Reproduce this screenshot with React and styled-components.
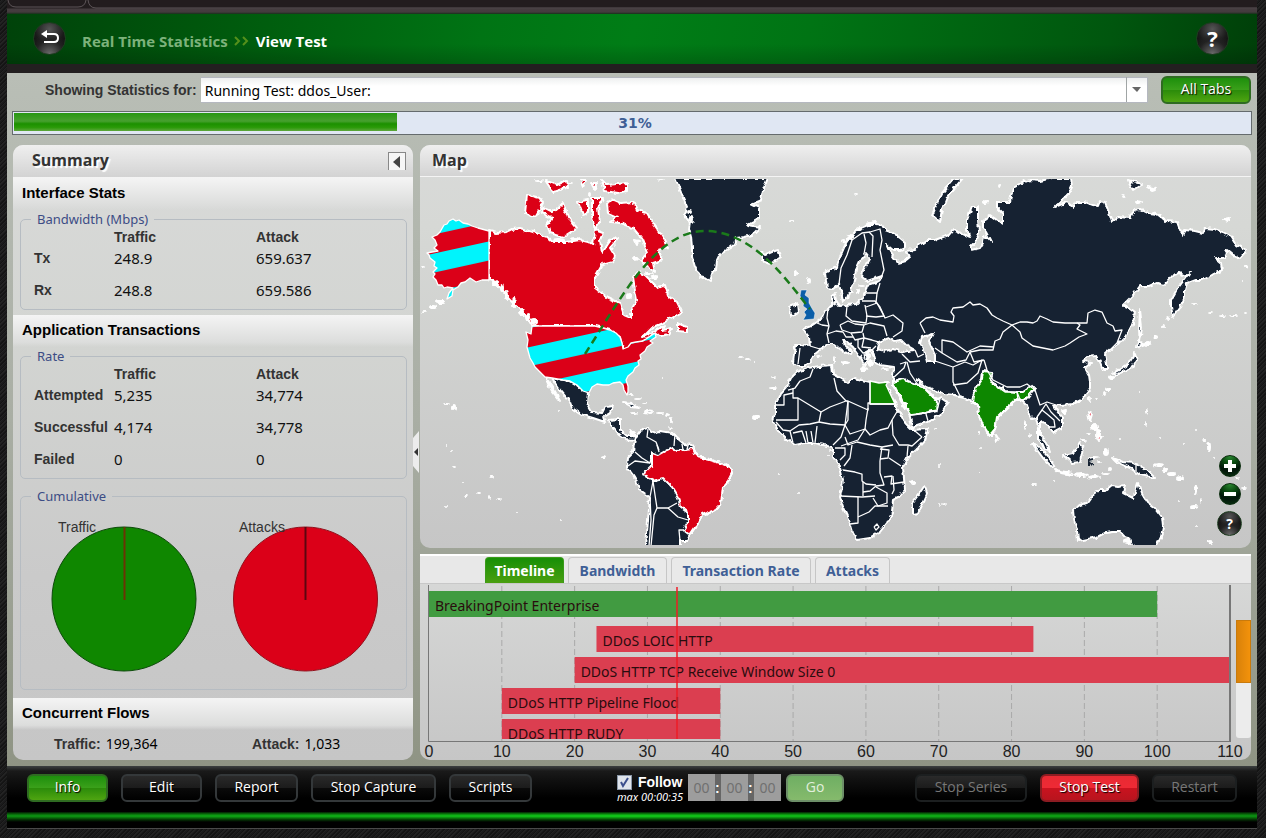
import React, { useState } from "react";
import styled, { createGlobalStyle } from "styled-components";

const theme = {
  fonts: {
    title: '"Open Sans", sans-serif',
    text: '"Noto Sans", sans-serif',
    label: '"Liberation Sans", Arial, sans-serif',
  },
  colors: {
    navy: "#142233",
    red: "#db0018",
    green: "#0f8700",
    cyan: "#00f4fc",
    blue: "#3f5f96",
    legend: "#3c4c85",
    dark: "#333333",
  },
};

const bandwidthRows = [
  { name: "Tx", traffic: "248.9", attack: "659.637" },
  { name: "Rx", traffic: "248.8", attack: "659.586" },
];

const rateRows = [
  { name: "Attempted", traffic: "5,235", attack: "34,774" },
  { name: "Successful", traffic: "4,174", attack: "34,778" },
  { name: "Failed", traffic: "0", attack: "0" },
];

const tabs = [
  { name: "Timeline", width: 79 },
  { name: "Bandwidth", width: 99 },
  { name: "Transaction Rate", width: 140 },
  { name: "Attacks", width: 75 },
];

const timelineBars = [
  { name: "BreakingPoint Enterprise", from: 0, to: 100, y: 7, color: "#419b41" },
  { name: "DDoS LOIC HTTP", from: 23, to: 83, y: 42, color: "#db3e50" },
  { name: "DDoS HTTP TCP Receive Window Size 0", from: 20, to: 110, y: 73, color: "#db3e50" },
  { name: "DDoS HTTP Pipeline Flood", from: 10, to: 40, y: 104, color: "#db3e50" },
  { name: "DDoS HTTP RUDY", from: 10, to: 40, y: 135, color: "#db3e50" },
];

const ticks = [0, 10, 20, 30, 40, 50, 60, 70, 80, 90, 100, 110];

/* ---- map data ---- */
const eurasia =
  "825,273 830,270 837,267 839,259 843,250 846,243 850,237 856,231 863,227 868,225 873,222 877,224 882,225 885,230 893,233 900,238 905,242 905,248 900,250 893,250 887,245 890,252 898,263 905,261 910,257 907,251 914,250 918,246 927,240 935,240 943,237 949,235 953,230 960,233 970,238 967,229 967,220 972,207 978,207 978,220 979,233 976,241 970,247 972,250 980,248 983,243 984,235 991,242 986,232 983,228 983,220 990,215 1002,224 1002,213 997,208 997,202 1010,202 1011,196 1013,188 1022,183 1030,180 1040,181 1052,178 1071,178 1072,187 1069,193 1055,207 1067,202 1074,208 1076,202 1085,202 1093,205 1098,206 1100,201 1105,202 1109,213 1112,222 1118,217 1130,218 1134,210 1140,209 1148,213 1157,214 1166,221 1177,222 1182,235 1184,230 1195,231 1203,233 1205,228 1214,229 1223,232 1232,237 1237,245 1247,250 1240,258 1233,255 1227,250 1224,258 1215,258 1221,263 1222,270 1212,275 1203,280 1195,280 1187,283 1185,290 1185,297 1180,307 1173,317 1171,307 1171,300 1176,291 1181,284 1190,272 1186,276 1179,273 1173,275 1169,280 1165,285 1157,283 1150,286 1140,286 1133,295 1123,305 1130,308 1135,312 1133,322 1130,330 1124,338 1118,345 1111,349 1105,354 1107,363 1107,370 1103,370 1100,362 1096,356 1088,357 1083,361 1092,362 1085,368 1089,375 1090,382 1090,388 1087,393 1081,400 1073,404 1060,405 1054,406 1057,411 1062,417 1062,428 1053,433 1048,426 1043,422 1040,424 1040,435 1046,441 1050,451 1045,450 1042,443 1038,439 1038,428 1036,417 1031,418 1027,405 1023,401 1017,400 1007,408 997,418 995,430 990,436 986,432 983,425 979,415 978,405 972,402 963,397 955,395 944,394 937,391 927,387 917,379 921,386 930,393 937,400 941,398 948,403 942,413 933,419 927,422 912,427 910,417 906,408 902,403 898,395 893,385 893,376 894,367 887,366 880,365 875,362 873,355 871,349 866,352 868,360 865,366 861,358 853,347 846,341 843,340 845,345 852,352 847,354 840,349 834,344 829,344 820,349 815,353 812,360 805,366 798,366 793,363 795,345 803,345 810,346 809,337 803,329 811,326 817,322 822,318 825,311 832,307 832,298 835,293 836,301 839,306 847,305 856,304 862,298 865,292 867,285 880,281 882,276 867,281 862,277 863,270 870,258 866,253 861,259 856,270 853,285 848,298 843,301 839,284 833,289 827,288";
const africa =
  "797,372 808,368 820,366 832,365 833,374 840,378 848,383 855,378 862,380 870,382 879,383 888,382 886,385 890,392 895,403 898,410 903,420 909,427 912,430 928,429 925,440 917,449 908,457 903,467 904,478 905,490 899,497 893,500 892,513 887,523 880,532 870,538 857,540 853,533 850,523 844,510 840,497 842,488 843,480 840,467 833,457 833,447 823,445 815,443 805,443 795,445 786,439 780,433 773,422 775,412 775,405 780,395 787,387 791,378";
const greenland =
  "675,178 680,190 684,200 687,207 685,215 690,222 689,230 691,237 692,247 692,257 695,267 700,277 707,279 710,281 713,272 716,270 717,260 720,254 730,248 735,244 737,238 745,237 752,235 760,227 748,225 759,219 759,208 751,204 761,200 763,190 768,178";
const southAmerica =
  "635,438 640,431 648,428 652,433 660,431 672,433 677,438 684,444 692,445 696,451 697,457 703,457 710,460 720,463 730,467 732,473 728,481 723,487 722,495 721,503 715,510 702,515 698,523 690,535 687,541 680,541 680,547 646,547 648,520 650,497 640,490 636,480 633,475 627,467 628,457 633,452";
const darkLands = [
  eurasia,
  africa,
  greenland,
  southAmerica,
  "552,378 563,380 570,381 577,385 582,390 588,393 587,403 592,412 602,413 605,407 613,406 610,413 603,417 605,422 593,418 583,415 572,408 570,402 560,390",
  "546,378 551,385 556,394 560,401 552,391",
  "608,420 620,419 620,430 627,436 635,436 634,440 626,439 619,434 613,427",
  "623,402 631,403 639,408 632,407",
  "646,410 653,411 651,413 645,412",
  "761,252 765,255 772,252 778,250 781,257 770,264 762,261",
  "790,307 797,304 798,312 791,317",
  "963,178 953,180 942,193 937,203 932,215 940,222 942,210 947,197 957,185",
  "1128,180 1134,182 1142,184 1133,190",
  "1148,187 1156,189 1153,190",
  "1136,201 1141,202 1138,203",
  "1224,219 1229,218 1228,221",
  "1140,310 1142,327 1140,342 1139,330",
  "1138,342 1145,345 1137,348",
  "1135,353 1137,360 1132,368 1115,375 1113,373 1128,365",
  "1088,399 1090,397 1089,402",
  "1062,411 1066,410 1064,413",
  "1063,455 1073,453 1080,443 1083,448 1080,462 1072,463",
  "1032,443 1042,450 1055,465 1053,468 1043,458",
  "1055,470 1073,473 1072,475 1057,472",
  "1113,458 1123,462 1135,463 1147,470 1155,478 1140,475 1130,468 1117,462",
  "996,434 999,438 997,441",
  "925,485 927,493 918,513 913,514 913,502 919,494",
  "1073,510 1080,505 1088,502 1093,495 1100,490 1106,490 1112,485 1118,486 1125,485 1123,493 1133,498 1138,483 1142,494 1147,502 1155,508 1162,517 1163,527 1161,537 1156,547 1133,547 1128,537 1124,536 1120,532 1113,532 1105,533 1097,537 1088,539 1078,541 1077,530 1074,520",
];
const canada =
  "489,231 497,233 507,232 513,229 520,228 533,232 547,237 553,242 567,242 580,240 588,242 593,245 595,230 603,233 600,240 602,253 608,244 613,237 618,239 610,248 615,256 613,262 602,265 595,277 595,288 607,297 620,303 624,315 631,318 631,310 637,300 635,290 633,277 638,272 645,275 653,283 658,288 665,285 668,295 677,302 682,312 677,315 665,322 653,327 643,337 653,332 665,325 663,331 672,329 668,334 660,336 656,333 643,341 636,347 623,349 620,337 610,330 595,326 532,326 527,317 517,307 507,297 500,287 495,282 489,280";
const redLands = [
  canada,
  "527,195 540,198 543,203 535,217 525,213",
  "543,207 553,212 563,203 568,217 577,228 563,237 550,233 547,225 552,218 542,213",
  "578,202 588,200 588,213 583,215",
  "592,198 603,198 598,207 600,223 595,230 592,217",
  "607,203 613,200 620,203 633,202 637,210 647,213 653,223 660,233 668,247 658,250 662,260 653,263 655,272 647,267 640,260 648,253 643,240 633,228 620,223 610,222 617,217 608,213",
  "602,180 607,185 627,183 627,191 617,193 605,191",
  "545,180 557,185 567,180 568,187 553,192",
  "580,180 586,180 583,187",
  "591,183 596,183 595,190",
  "635,240 639,241 637,244",
  "634,258 638,258 636,261",
  "678,323 682,325 687,327 687,332 678,331",
  "1088,412 1092,414 1090,421",
  "1097,437 1102,436 1099,441",
];
const brazil =
  "673,447 677,451 693,449 697,457 710,460 720,463 730,467 732,473 728,481 723,487 722,495 721,503 715,510 702,515 698,523 690,535 683,530 688,522 688,513 680,507 678,497 672,487 663,478 653,481 647,478 644,473 652,465 652,453 658,455 667,450";
const striped = [
  "444,225 447,224 449,221 453,219 456,221 459,220 463,223 468,224 472,226 478,228 489,231 489,280 482,280 476,282 470,278 465,282 461,283 458,287 453,290 452,296 447,299 449,293 453,288 447,287 444,288 442,285 438,285 436,280 433,277 435,274 433,272 437,268 434,266 435,262 430,258 429,255 427,253 432,252 438,251 434,248 437,245 435,240 432,237 437,235 440,232",
  "532,326 595,326 603,328 610,330 616,333 620,337 622,343 623,349 628,347 631,343 636,342 643,341 655,333 656,337 650,341 653,343 647,347 645,351 640,355 641,359 638,361 639,365 635,368 633,372 628,376 626,380 628,386 628,392 627,395 624,390 623,385 620,382 613,383 609,385 603,385 597,384 592,387 589,393 583,391 577,385 570,381 563,380 552,378 545,377 540,372 535,367 533,363 530,358 527,347 528,340 526,332 531,334",
];
const india =
  "983,371 992,372 990,378 995,385 1006,391 1016,392 1022,392 1032,385 1035,388 1025,400 1017,399 1007,408 997,418 995,430 990,436 983,425 979,415 978,405 972,402 973,396 976,388 982,379";
const saudi = "893,382 903,379 923,387 930,394 938,402 937,410 925,413 910,415 902,400";
const egypt = "870,381 879,383 888,382 886,385 895,404 870,404";
const uk = "801,290 807,290 805,295 809,298 809,303 813,310 815,313 814,319 803,320 806,315 804,312 807,309 803,306 804,302 800,296";
const seas = [
  "877,349 879,342 889,338 894,341 901,340 907,346 914,350 903,352 893,349 885,351",
  "922,337 933,334 929,342 935,354 935,362 927,362 924,350 920,344",
  "631,430 634,433 632,435",
];
const borders = [
  // Asia
  "920,323 926,318 933,317 940,320 953,322 954,316 951,312 953,308 963,307 970,302 973,305 980,304 987,308 992,315 997,318 1003,321 1012,325 1020,322 1027,322 1033,323 1037,321 1040,316 1047,319 1053,322 1065,323 1077,323 1087,323 1088,313 1095,310 1102,312 1107,323 1113,326 1115,331 1122,330 1117,343 1108,352",
  "1012,325 1020,332 1022,338 1033,346 1043,348 1053,350 1065,346 1070,343 1079,337 1087,334 1077,329 1080,325 1077,323",
  "1012,325 1003,332 1000,339 995,341 993,350 980,350 970,352 974,362 984,360",
  "920,323 925,333",
  "942,353 942,340 953,342 967,352 980,346 994,347",
  "935,348 942,353 957,362 966,360 970,352",
  "984,360 987,370 993,380 1007,387 1020,387 1027,384 1035,390 1040,405 1047,402 1056,405",
  "935,361 938,362 953,367 953,382 960,396",
  "953,367 965,362 973,365 982,360 978,373 967,383 953,385",
  "992,383 1005,392 1017,392 1018,400",
  "907,362 910,373 918,385",
  "893,378 904,368 906,362 900,364",
  "915,350 918,357 924,354",
  "902,354 910,362 920,361",
  "910,415 925,413 937,410 940,399",
  "926,414 928,421",
  "1037,417 1042,410 1047,414 1054,420 1055,427 1048,427",
  "1042,410 1046,404 1051,412 1060,421",
  "1017,392 1021,402",
  // Nordic and Baltic countries
  "839,284 841,268 847,255 852,240 862,233 870,232 880,229 882,240 880,250 884,270 881,278",
  "864,254 866,243 864,234",
  "872,257 873,236 869,232",
  "864,293 877,293 880,283",
  "862,301 875,301 880,307 885,318 893,315 903,323 902,331 893,337",
  "877,293 876,303",
  // Central Europe
  "847,306 846,316 852,321 866,323 867,316 865,305",
  "866,307 877,303 884,316",
  "866,316 876,317 884,316",
  "864,325 870,323 884,326 887,336",
  "840,325 848,321 855,324 864,325 862,332 851,333 842,330 840,325",
  "828,308 827,318 829,326 827,334 829,343",
  "817,323 822,325 829,326",
  "827,334 836,331 843,332 846,337 853,337",
  "851,333 855,340 864,338 863,333",
  "864,338 872,340 879,342",
  "858,339 858,347 863,353 872,350 876,346",
  "864,353 865,360",
  "864,338 862,347 871,348",
  "810,346 820,349",
  "800,348 798,364",
  // Africa
  "813,369 810,377 800,381 795,388 788,390",
  "793,388 793,398 798,398 821,412 830,407 846,401 837,391 834,378",
  "798,398 798,420 776,420",
  "775,405 784,405 784,395 793,393",
  "870,403 868,403 868,410 848,401 846,401",
  "870,381 870,404 896,404",
  "821,412 819,422 810,424 799,425 790,431",
  "776,422 783,430 790,431 793,443",
  "793,433 802,431 806,443",
  "806,431 808,443",
  "811,431 813,443",
  "817,426 815,443",
  "819,422 830,424 845,425 848,401",
  "845,425 841,437 833,445",
  "848,401 848,420 845,425 850,434 865,429 870,435 880,430 888,428 892,420 898,410",
  "868,408 866,420 865,429",
  "892,420 893,435 899,445 908,445 912,446 922,437",
  "905,423 915,431 922,437",
  "845,437 848,445 857,442 870,445 882,447 893,445",
  "865,429 858,440 841,446",
  "835,448 845,448 845,455 840,460",
  "843,470 855,472 862,474 862,481 866,484 876,485",
  "852,445 850,458 844,466",
  "882,447 880,461 880,473 884,485 876,486",
  "880,449 889,450 888,458 880,459",
  "908,446 907,457",
  "889,458 901,466",
  "884,477 892,476 891,484 904,482",
  "893,476 894,490 892,494",
  "840,496 862,497 875,496",
  "863,482 863,496",
  "876,486 870,491 863,492",
  "858,497 858,523 850,524",
  "858,517 869,512 875,506 888,506",
  "876,487 887,493 887,503 878,506 873,498",
  "874,527 877,524 879,527 876,530 874,527",
  // Americas
  "628,466 635,461 650,463",
  "635,452 642,458 650,463 652,454",
  "648,429 647,437 656,442 659,450",
  "659,452 657,445",
  "675,434 674,446",
  "682,444 683,450",
  "688,445 687,450",
  "650,497 653,481",
  "653,481 655,495 657,508",
  "650,497 651,520 649,546",
  "657,508 654,515 651,546",
  "657,508 668,508 677,503",
  "668,508 678,517 688,520",
  "680,541 679,530 684,530",
  "1136,463 1136,475",
];

// [x, y, rx, ry] of the islands too small to have a border
const islets = [
  [447, 404, 3, 1], [454, 407, 2, 3], [447, 446, 1, 1], [451, 451, 1, 1], [454, 467, 2, 1], [492, 477, 2, 2],
  [463, 482, 1, 1], [466, 495, 2, 1], [479, 493, 2, 1], [489, 497, 1, 2], [499, 499, 2, 1], [446, 506, 1, 1],
  [517, 513, 1, 1], [561, 520, 1, 1], [603, 457, 3, 2], [558, 411, 1, 1], [423, 267, 2, 1], [631, 395, 3, 1],
  [638, 399, 3, 1], [645, 403, 3, 1], [660, 413, 4, 1], [667, 415, 2, 2], [671, 420, 2, 3], [670, 428, 2, 1],
  [634, 413, 4, 1], [741, 357, 2, 1], [748, 359, 3, 1], [754, 362, 1, 1], [663, 377, 1, 1], [773, 377, 2, 1],
  [756, 417, 4, 2], [773, 388, 4, 1], [796, 273, 2, 3], [809, 281, 2, 3], [792, 221, 3, 1], [856, 194, 2, 1],
  [819, 356, 3, 1], [834, 360, 1, 4], [845, 363, 4, 2], [864, 369, 4, 2], [871, 363, 3, 3], [885, 369, 4, 1],
  [851, 292, 3, 1], [858, 291, 2, 3], [835, 303, 2, 2], [862, 286, 3, 1], [1000, 186, 2, 2], [986, 202, 3, 2],
  [1123, 196, 2, 2], [1168, 318, 2, 2], [1163, 327, 2, 2], [1155, 337, 3, 2], [1148, 343, 4, 2], [1195, 304, 3, 1],
  [1210, 313, 3, 1], [1222, 316, 4, 1], [1234, 316, 4, 1], [1245, 314, 2, 1], [1246, 266, 2, 2], [1242, 281, 1, 1],
  [1112, 377, 3, 2], [1108, 389, 3, 2], [1104, 394, 2, 2], [1097, 398, 2, 1], [1139, 392, 1, 1], [1146, 412, 1, 3],
  [1145, 424, 1, 2], [1120, 439, 1, 1], [1160, 438, 1, 1], [1184, 444, 1, 1], [1205, 440, 3, 1], [1209, 447, 2, 5],
  [1213, 457, 1, 1], [1196, 430, 1, 1], [1095, 427, 4, 3], [1098, 433, 3, 4], [1089, 434, 3, 1], [1083, 440, 4, 1],
  [1081, 475, 7, 2], [1094, 477, 6, 2], [1105, 474, 4, 1], [1106, 452, 3, 4], [1093, 458, 6, 1], [1111, 469, 2, 2],
  [1100, 462, 2, 1], [1159, 465, 5, 2], [1165, 470, 3, 2], [1172, 474, 4, 2], [1180, 478, 4, 2], [1196, 490, 2, 5],
  [1201, 501, 1, 3], [1194, 507, 4, 2], [1179, 501, 1, 1], [1197, 526, 1, 1], [1210, 542, 3, 2], [1244, 488, 3, 1],
  [1025, 425, 1, 5], [1030, 435, 1, 2], [1034, 484, 2, 1], [1055, 480, 1, 1], [979, 433, 1, 3], [981, 448, 1, 1],
  [936, 428, 2, 1], [939, 466, 1, 1], [979, 472, 1, 1], [913, 483, 3, 2], [940, 505, 1, 2], [944, 504, 2, 1],
  [799, 493, 1, 1], [779, 474, 1, 1], [830, 451, 2, 1], [828, 456, 1, 1], [534, 322, 4, 3], [528, 317, 3, 4],
  [522, 312, 3, 4], [514, 303, 2, 5], [507, 295, 2, 5], [502, 288, 2, 4], [495, 283, 3, 2], [441, 302, 5, 2],
  [433, 307, 4, 2], [425, 312, 3, 1], [1235, 463, 2, 1], [1237, 478, 2, 1], [1128, 541, 4, 3], [570, 183, 3, 1],
  [590, 194, 2, 2], [539, 181, 4, 1], [660, 179, 3, 1], [661, 180, 3, 1], [691, 220, 3, 4], [689, 212, 2, 2],
  [558, 240, 6, 2], [575, 239, 5, 2], [629, 296, 3, 3], [655, 277, 4, 2], [649, 273, 4, 1], [850, 238, 3, 3],
  [844, 241, 3, 2], [870, 224, 4, 2], [859, 229, 3, 2], [868, 356, 3, 4],
];

const GlobalStyle = createGlobalStyle`
  * {
    box-sizing: border-box;
  }
  body {
    margin: 0;
    background: repeating-linear-gradient(135deg, #141414 0 1px, #232323 1px 2px, #1b1b1c 2px 3px);
  }
  button, input, select {
    margin: 0;
    font: inherit;
  }
`;

function StatsTable({ rows }) {
  return (
    <StatsTableStyled>
      <thead>
        <tr>
          <td />
          <th scope="col">Traffic</th>
          <th scope="col">Attack</th>
        </tr>
      </thead>
      <tbody>
        {rows.map((row) => (
          <tr key={row.name}>
            <th scope="row">{row.name}</th>
            <td>{row.traffic}</td>
            <td>{row.attack}</td>
          </tr>
        ))}
      </tbody>
    </StatsTableStyled>
  );
}

function Summary() {
  return (
    <SummaryStyled>
      <PanelHeader>
        <h2>Summary</h2>
        <CollapseButton type="button" aria-label="Collapse summary">
          <svg width="8" height="12" viewBox="0 0 8 12">
            <path d="M7 0v12L0 6z" fill="#444" />
          </svg>
        </CollapseButton>
      </PanelHeader>
      <SectionTitle>Interface Stats</SectionTitle>
      <Group $gap={5}>
        <legend>Bandwidth (Mbps)</legend>
        <StatsTable rows={bandwidthRows} />
      </Group>
      <SectionTitle>Application Transactions</SectionTitle>
      <Group $gap={8}>
        <legend>Rate</legend>
        <StatsTable rows={rateRows} />
      </Group>
      <Group $gap={8}>
        <legend>Cumulative</legend>
        <Pies viewBox="21 505 385 184">
          <circle cx="124" cy="599" r="72" fill={theme.colors.green} stroke="#0b4a08" />
          <path d="M124.500 527v73" stroke="#6b3305" strokeWidth="2" />
          <circle cx="305.500" cy="599" r="72" fill={theme.colors.red} stroke="#93101c" />
          <path d="M305.500 527v73" stroke="#5c0610" strokeWidth="2" />
          <text x="58" y="532">Traffic</text>
          <text x="239" y="532">Attacks</text>
        </Pies>
      </Group>
      <SectionTitle>Concurrent Flows</SectionTitle>
      <Flows>
        <div><dt>Traffic:</dt><dd>199,364</dd></div>
        <div><dt>Attack:</dt><dd>1,033</dd></div>
      </Flows>
      <SplitHandle type="button" aria-label="Toggle summary">
        <svg width="7" height="42" viewBox="0 0 7 42">
          <path d="M6 0v42L0 35V7z" fill="#ececec" />
          <path d="M5 17v8L1 21z" fill="#333" />
        </svg>
      </SplitHandle>
    </SummaryStyled>
  );
}

function WorldMap() {
  return (
    <MapPanel>
      <PanelHeader $compact>
        <h2>Map</h2>
      </PanelHeader>
      <MapSvg viewBox="420 179 831 366" preserveAspectRatio="xMidYMid slice" role="img" aria-label="World map">
        <defs>
          <pattern id="stripes" width="40" height="37.3" y="5.1" patternUnits="userSpaceOnUse" patternTransform="rotate(-12.4)">
            <rect width="40" height="37.3" fill={theme.colors.red} />
            <rect width="40" height="18.6" fill={theme.colors.cyan} />
          </pattern>
          {/* breaks up the straight coast segments */}
          <filter id="coast" filterUnits="userSpaceOnUse" x="420" y="179" width="831" height="366">
            <feTurbulence type="fractalNoise" baseFrequency="0.18" numOctaves="2" seed="4" />
            <feDisplacementMap in="SourceGraphic" scale="5" xChannelSelector="R" yChannelSelector="G" />
          </filter>
        </defs>
        <g filter="url(#coast)" stroke="#fff" strokeWidth="2" strokeLinejoin="round">
          {darkLands.map((points) => (
            <polygon key={points} points={points} fill={theme.colors.navy} />
          ))}
          {redLands.map((points) => (
            <polygon key={points} points={points} fill={theme.colors.red} />
          ))}
          <polygon points={brazil} fill={theme.colors.red} />
          <polygon points={india} fill={theme.colors.green} />
          <polygon points={saudi} fill={theme.colors.green} />
          {seas.map((points) => (
            <polygon key={points} points={points} fill="#d0d1cf" />
          ))}
          {islets.map(([x, y, rx, ry]) => (
            <ellipse key={`${x}-${y}`} cx={x} cy={y} rx={rx} ry={ry} fill="#fff" stroke="none" />
          ))}
          <path d="M1089 466v-6l3-1M1089 461l4 5" stroke={theme.colors.navy} fill="none" />
        </g>
        <polygon points={uk} fill="#0b5ea8" stroke="#fff" strokeWidth="0.5" />
        <g stroke="#fff" strokeWidth="1.3" strokeLinejoin="round">
          <polygon points={egypt} fill={theme.colors.green} />
          {striped.map((points) => (
            <polygon key={points} points={points} fill="url(#stripes)" />
          ))}
        </g>
        <g stroke="#fff" strokeWidth="1.3" fill="none" strokeLinejoin="round">
          {borders.map((points) => (
            <polyline key={points} points={points} />
          ))}
        </g>
        <path d="M585 354C620 300 655 231 705 231S790 285 810 309" fill="none" stroke="#1a7a1a" strokeWidth="2.5" strokeDasharray="8 5" />
      </MapSvg>
      <MapControls>
        <RoundButton type="button" $size={22} $green aria-label="Zoom in">
          <svg width="14" height="14" viewBox="0 0 14 14"><path d="M7 1v12M1 7h12" stroke="#fff" strokeWidth="4" /></svg>
        </RoundButton>
        <RoundButton type="button" $size={22} $green aria-label="Zoom out">
          <svg width="14" height="14" viewBox="0 0 14 14"><path d="M1 7h12" stroke="#fff" strokeWidth="4" /></svg>
        </RoundButton>
        <RoundButton type="button" $size={25} $fontSize={14}>?</RoundButton>
      </MapControls>
    </MapPanel>
  );
}

function Timeline() {
  const scale = (value) => 9 + (value * 801) / 110;
  return (
    <ChartArea>
      <Chart viewBox="0 0 816 176" preserveAspectRatio="xMinYMin meet">
        <defs>
          <clipPath id="plot"><rect x="8" y="0" width="803" height="155" /></clipPath>
        </defs>
        {ticks.slice(1, -1).map((tick) => (
          <path key={tick} d={`M${scale(tick)} 2V157`} stroke="#aaa" strokeDasharray="6 3" />
        ))}
        <g clipPath="url(#plot)">
          {timelineBars.map((bar) => (
            <g key={bar.name}>
              <rect x={scale(bar.from)} y={bar.y} width={scale(bar.to) - scale(bar.from)} height="26" fill={bar.color} />
              <text className="barName" x={scale(bar.from) + 6} y={bar.y + 20}>{bar.name}</text>
            </g>
          ))}
          <path d="M257 3V155" stroke="#ee1c25" strokeOpacity="0.75" strokeWidth="2" />
        </g>
        <path d="M8.500 1V157.500H810" fill="none" stroke="#777" />
        <path d="M810 1V158" stroke="#777" strokeWidth="2" />
        {ticks.map((tick) => (
          <text key={tick} className="tick" x={scale(tick)} y="173" textAnchor="middle">{tick}</text>
        ))}
      </Chart>
      <ScrollTrack><div /></ScrollTrack>
    </ChartArea>
  );
}

export default function App() {
  const [follow, setFollow] = useState(true);
  const progress = 31;

  return (
    <Frame>
      <GlobalStyle />
      <TopStrip>
        <svg width="100%" height="9">
          <path d="M1 0q1 7 8 7h62q7 0 8-7M81 0q1 8 8 8H2000" fill="none" stroke="#5d5558" />
        </svg>
      </TopStrip>
      <Header>
        <RoundButton type="button" $size={33} aria-label="Back">
          <svg width="20" height="18" viewBox="0 0 20 18">
            <path d="M5 5h9q4 0 4 4t-4 4H4" fill="none" stroke="#fff" strokeWidth="2" />
            <path d="M1 5l6-4v8z" fill="#fff" />
          </svg>
        </RoundButton>
        <Breadcrumb>
          <a href="#statistics">Real Time Statistics</a>
          <svg width="16" height="10" viewBox="0 0 16 10">
            <path d="M1 1l4 4-4 4M9 1l4 4-4 4" fill="none" stroke="#55901b" strokeWidth="2" />
          </svg>
          <h1>View Test</h1>
        </Breadcrumb>
        <RoundButton type="button" $size={33} $fontSize={22}>?</RoundButton>
      </Header>
      <Content>
        <Filter>
          <label htmlFor="runningTest">Showing Statistics for:</label>
          <SelectBox>
            <select id="runningTest">
              <option>Running Test: ddos_User:</option>
            </select>
            <svg width="21" height="25" viewBox="0 0 21 25">
              <path d="M0.500 0v25" stroke="#a0a5a5" />
              <path d="M6 10h9l-4 5z" fill="#666" />
            </svg>
          </SelectBox>
          <BarButton type="button" $variant="green" $width={90}>All Tabs</BarButton>
        </Filter>
        <Progress role="progressbar" aria-valuenow={progress} aria-label="Test progress">
          <div className="bar" style={{ width: `${progress}%` }} />
          <span>{progress}%</span>
        </Progress>
        <Columns>
          <Summary />
          <MainColumn>
            <WorldMap />
            <TimelinePanel>
              <TabBar role="tablist">
                {tabs.map((tab, index) => (
                  <Tab key={tab.name} type="button" role="tab" aria-selected={index === 0} $active={index === 0} $width={tab.width}>
                    {tab.name}
                  </Tab>
                ))}
              </TabBar>
              <Timeline />
            </TimelinePanel>
          </MainColumn>
        </Columns>
      </Content>
      <Footer>
        <ButtonRow>
          <BarButton type="button" $variant="green" $width={81}>Info</BarButton>
          <BarButton type="button" $width={81}>Edit</BarButton>
          <BarButton type="button" $width={83}>Report</BarButton>
          <BarButton type="button" $width={125}>Stop Capture</BarButton>
          <BarButton type="button" $width={83}>Scripts</BarButton>
        </ButtonRow>
        <Seek>
          <FollowBox>
            <label>
              <input type="checkbox" checked={follow} onChange={() => setFollow(!follow)} />
              Follow
            </label>
            <small>max 00:00:35</small>
          </FollowBox>
          <TimeBoxes>
            <input type="text" aria-label="Hours" defaultValue="00" disabled />
            <span>:</span>
            <input type="text" aria-label="Minutes" defaultValue="00" disabled />
            <span>:</span>
            <input type="text" aria-label="Seconds" defaultValue="00" disabled />
          </TimeBoxes>
          <BarButton type="button" $variant="pale" $width={58} disabled>Go</BarButton>
        </Seek>
        <ButtonRow>
          <BarButton type="button" $width={112} disabled>Stop Series</BarButton>
          <BarButton type="button" $variant="red" $width={99}>Stop Test</BarButton>
          <BarButton type="button" $width={85} disabled>Restart</BarButton>
        </ButtonRow>
      </Footer>
      <GreenLine />
    </Frame>
  );
}

const Frame = styled.div`
  margin: 0 9px 9px 7px;
  min-width: 1100px;
  border-bottom: 1px solid #4a4a4a;
  background: #000;
`;

const TopStrip = styled.div`
  height: 14px;
  background: linear-gradient(#221c1e 0 8px, #453d40 9px, #443b3e 12px, #16301a 14px);

  svg {
    display: block;
  }
`;

const Header = styled.header`
  display: flex;
  align-items: center;
  height: 59px;
  padding: 0 28px 2px 26px;
  border-bottom: 9px solid #231f20;
  background:
    linear-gradient(rgba(0, 0, 0, 0) 60%, rgba(0, 0, 0, 0.18)),
    linear-gradient(100deg, #00420a 0%, #00560c 15%, #007414 38%, #007d16 50%, #007414 64%, #00560e 88%, #003f09 100%);
`;

const RoundButton = styled.button`
  display: flex;
  flex: none;
  align-items: center;
  justify-content: center;
  width: ${({ $size }) => $size}px;
  height: ${({ $size }) => $size}px;
  padding: 0;
  border: 1px solid ${({ $green }) => ($green ? "#0b2c0e" : "#1e3d20")};
  border-radius: 50%;
  color: #fff;
  font: bold ${({ $fontSize }) => $fontSize || 14}px ${theme.fonts.title};
  line-height: 1;
  background: ${({ $green }) =>
    $green
      ? "radial-gradient(circle at 50% 0%, #2b8a32, #0a4a10 35%, #02140a 65%, #0a3510)"
      : "radial-gradient(circle at 50% 100%, #6b6b6b, #222 40%, transparent 60%), radial-gradient(circle at 50% 20%, #555, #1a1a1a 50%, #050505)"};
`;

const Breadcrumb = styled.nav`
  display: flex;
  flex: 1;
  align-items: center;
  gap: 6px;
  margin-left: 16px;
  padding-top: 6px;
  color: #fff;
  font: bold 15px ${theme.fonts.title};

  a {
    color: #7db27b;
    text-decoration: none;
  }
  h1 {
    margin: 0;
    font: inherit;
  }
`;

const Content = styled.main`
  padding: 3px 5px 6px;
  background: linear-gradient(#b9beb6, #a9aea4 50%, #8f9484);
`;

const Filter = styled.div`
  display: flex;
  align-items: center;
  padding: 0 1px 0 33px;

  label {
    margin-right: 4px;
    color: ${theme.colors.dark};
    font: bold 14px ${theme.fonts.label};
  }
`;

const SelectBox = styled.div`
  position: relative;
  flex: 1;
  margin-right: 13px;

  select {
    display: block;
    width: 100%;
    height: 26px;
    padding: 0 4px;
    border: 1px solid #b5b8c0;
    border-left: 0;
    border-radius: 0;
    appearance: none;
    color: #000;
    background: linear-gradient(#eef0f0, #fff 8px);
    font: 14px ${theme.fonts.text};
  }
  svg {
    position: absolute;
    top: 0;
    right: 1px;
    pointer-events: none;
  }
`;

const barVariants = {
  dark: { border: "#34383a", background: "linear-gradient(#2a2a2a, #1c1c1c 48%, #0a0a0a 52%, #000)" },
  green: { border: "#2f6b22", background: "linear-gradient(#1d8f0c, #3aa01a 48%, #2c8c0a 52%, #4fa511)" },
  pale: { border: "#6d8f68", background: "linear-gradient(#6fae63, #85ba6c)" },
  red: { border: "#8c1c22", background: "linear-gradient(#e82a33, #ee2a35 48%, #c9131f 52%, #b8141e)" },
};

const BarButton = styled.button`
  flex: none;
  width: ${({ $width }) => $width}px;
  height: 28px;
  padding: 0 0 3px;
  border: 2px solid ${({ $variant }) => barVariants[$variant || "dark"].border};
  border-radius: 6px;
  background: ${({ $variant }) => barVariants[$variant || "dark"].background};
  color: #fff;
  font: 500 14px ${theme.fonts.title};
  line-height: 20px;
  text-shadow: 1px 1px 1px #000;
  white-space: nowrap;

  &:disabled {
    color: ${({ $variant }) => ($variant ? "#e2efdd" : "#777")};
    border-color: ${({ $variant }) => ($variant ? "#6d8f68" : "#1c1f20")};
    text-shadow: none;
  }
`;

const Progress = styled.div`
  display: flex;
  position: relative;
  height: 24px;
  margin-top: 7px;
  padding: 1px 1px 3px;
  border: 1px solid #656b6d;
  background: #e0e7f3;

  .bar {
    background: linear-gradient(#279712, #47a02f 45%, #1c9000 60%, #2a9a08 80%, #5da63c);
  }
  span {
    position: absolute;
    inset: 0 0 0 6px;
    color: ${theme.colors.blue};
    font: bold 14px/22px "DejaVu Sans", sans-serif;
    text-align: center;
  }
`;

const Columns = styled.div`
  display: grid;
  grid-template-columns: 400px minmax(0, 1fr);
  gap: 7px;
  margin: 10px 1px 0;
`;

const SummaryStyled = styled.section`
  position: relative;
  border-radius: 10px;
  background: linear-gradient(#d9dad9, #d3d5d2 30%, #cacaca 70%, #c6c6c6);
`;

const PanelHeader = styled.div`
  display: flex;
  align-items: center;
  justify-content: space-between;
  height: ${({ $compact }) => ($compact ? 32 : 33)}px;
  padding: 0 7px 0 ${({ $compact }) => ($compact ? 12 : 19)}px;
  border-bottom: 1px solid #f4f4f4;
  border-radius: 10px 10px 0 0;
  background: linear-gradient(#efefef, #d3d3d3);

  h2 {
    margin: 0;
    padding-bottom: 2px;
    color: ${theme.colors.dark};
    font: bold 16px/22px ${theme.fonts.title};
    text-shadow: 2px 2px 1px #fff;
  }
`;

const CollapseButton = styled.button`
  display: flex;
  align-items: center;
  justify-content: center;
  width: 18px;
  height: 18px;
  padding: 0;
  border: 1px solid #888;
  border-bottom: 0;
  background: #f6f6f6;
`;

const SectionTitle = styled.h3`
  height: 32px;
  margin: 0;
  padding-left: 9px;
  background: linear-gradient(#f4f4f4, #dcdddc 85%, rgba(216, 217, 216, 0));
  color: #000;
  font: bold 15px/30px ${theme.fonts.label};
`;

const Group = styled.fieldset`
  margin: 0 6px ${({ $gap }) => $gap}px 7px;
  padding: 0;
  border: 1px solid #b6bcc2;
  border-radius: 5px;

  legend {
    margin-left: 10px;
    padding: 0 6px;
    color: ${theme.colors.legend};
    font: 13px/18px ${theme.fonts.text};
  }
`;

const StatsTableStyled = styled.table`
  width: 100%;
  border-collapse: collapse;
  table-layout: fixed;
  text-align: left;

  th, td {
    padding: 0;
    color: #111;
    font: 15px/22px ${theme.fonts.text};
    vertical-align: top;
  }
  th {
    color: ${theme.colors.dark};
    font: bold 14px/22px ${theme.fonts.label};
  }
  thead th {
    height: 19px;
    line-height: 19px;
  }
  tbody tr {
    height: 32px;
  }
  tbody tr:last-child {
    height: 30px;
  }
  td:first-child, th:first-child {
    width: 93px;
    padding-left: 13px;
  }
  th:nth-child(2), td:nth-child(2) {
    width: 142px;
  }
`;

const Pies = styled.svg`
  display: block;
  width: 100%;

  text {
    fill: #333;
    font: 14px ${theme.fonts.label};
  }
`;

const Flows = styled.dl`
  display: grid;
  grid-template-columns: 198px 1fr;
  margin: 0;
  padding: 0 0 2px 41px;
  line-height: 28px;

  div {
    display: flex;
    gap: 5px;
  }
  dt {
    color: ${theme.colors.dark};
    font: bold 14px/28px ${theme.fonts.label};
  }
  dd {
    margin: 0;
    font: 14px/28px ${theme.fonts.text};
  }
`;

const SplitHandle = styled.button`
  position: absolute;
  top: 286px;
  right: -7px;
  width: 7px;
  height: 42px;
  padding: 0;
  border: 0;
  background: none;
`;

const MainColumn = styled.div`
  display: flex;
  flex-direction: column;
  gap: 6px;
`;

const MapPanel = styled.section`
  position: relative;
  flex: 1;
  padding-bottom: 3px;
  border-radius: 10px;
  background: linear-gradient(#d9dad9, #d6d8d5 20%, #c6c6c6);
`;

const MapSvg = styled.svg`
  display: block;
  width: 100%;
  height: 366px;
  margin-top: 2px;
`;

const MapControls = styled.div`
  display: flex;
  position: absolute;
  right: 9px;
  bottom: 12px;
  flex-direction: column;
  align-items: center;
  gap: 6px;
`;

const TimelinePanel = styled.section`
  border-radius: 0 0 10px 10px;
  background: linear-gradient(#d9dad9, #c6c6c6);
`;

const TabBar = styled.div`
  display: flex;
  align-items: flex-end;
  gap: 4px;
  height: 30px;
  padding: 0 65px;
  border-top: 2px solid #fff;
  border-bottom: 1px solid #c8c8c8;
  background: #e8e8e8;
`;

const Tab = styled.button`
  width: ${({ $width }) => $width}px;
  height: 26px;
  padding: 0 0 1px;
  border: 1px solid ${({ $active }) => ($active ? "#3a9a1a" : "#c6c6c6")};
  border-bottom: 0;
  border-radius: 4px 4px 0 0;
  background: ${({ $active }) => ($active ? "linear-gradient(#178f06, #4a9f10)" : "#e9e9e9")};
  color: ${({ $active }) => ($active ? "#fff" : theme.colors.blue)};
  font: bold 14px ${theme.fonts.text};
  white-space: nowrap;
`;

const ChartArea = styled.div`
  display: flex;
  align-items: flex-start;
`;

const Chart = styled.svg`
  display: block;
  flex: 1;
  min-width: 0;
  overflow: visible;

  .barName {
    fill: #2a0c0e;
    font: 14px ${theme.fonts.text};
  }
  .tick {
    fill: #222;
    font: 16px ${theme.fonts.label};
  }
`;

const ScrollTrack = styled.div`
  width: 15px;
  height: 118px;
  margin-top: 36px;
  border-radius: 3px;
  background: #ececec;

  div {
    height: 63px;
    border: 1px solid #c97a0c;
    background: linear-gradient(90deg, #d9820a, #f3920b);
  }
`;

const Footer = styled.footer`
  display: flex;
  align-items: flex-start;
  justify-content: space-between;
  height: 46px;
  padding: 8px 20px 0;
  background: linear-gradient(#3c4040, #1a1a1a 5px, #101010 14px, #000 32px);
`;

const ButtonRow = styled.div`
  display: flex;
  gap: 13px;
`;

const Seek = styled.div`
  display: flex;
  margin-left: 14px;
  gap: 5px;
`;

const FollowBox = styled.div`
  color: #fff;

  label {
    display: flex;
    align-items: center;
    gap: 6px;
    height: 16px;
    font: bold 14px ${theme.fonts.label};
  }
  input {
    width: 15px;
    height: 15px;
    border: 1px solid #8a97a8;
    appearance: none;
    background: #dfe4ec;
  }
  input:checked {
    background: #dfe4ec url("data:image/svg+xml,%3Csvg xmlns='http://www.w3.org/2000/svg' viewBox='0 0 13 13'%3E%3Cpath d='M3 6l2 4 5-8' fill='none' stroke='%233c4f8c' stroke-width='2'/%3E%3C/svg%3E");
  }
  small {
    display: block;
    font: italic 11px/14px ${theme.fonts.text};
  }
`;

const TimeBoxes = styled.div`
  display: flex;
  height: 27px;
  background: #666;

  input {
    width: 27px;
    padding: 0;
    border: 0;
    background: #9d9d9d;
    color: #707070;
    font: 14px ${theme.fonts.text};
    text-align: center;
  }
  span {
    width: 6px;
    color: #fff;
    font: bold 14px/28px ${theme.fonts.label};
  }
`;

const GreenLine = styled.div`
  height: 16px;
  background:
    linear-gradient(90deg, rgba(0, 0, 0, 0.3), transparent 50%, rgba(0, 0, 0, 0.3)),
    linear-gradient(#031f03, #0a8a0c 2px, #12d61c 4px, #0a8a0c 6px, #043804 8px, #000 10px);
`;
